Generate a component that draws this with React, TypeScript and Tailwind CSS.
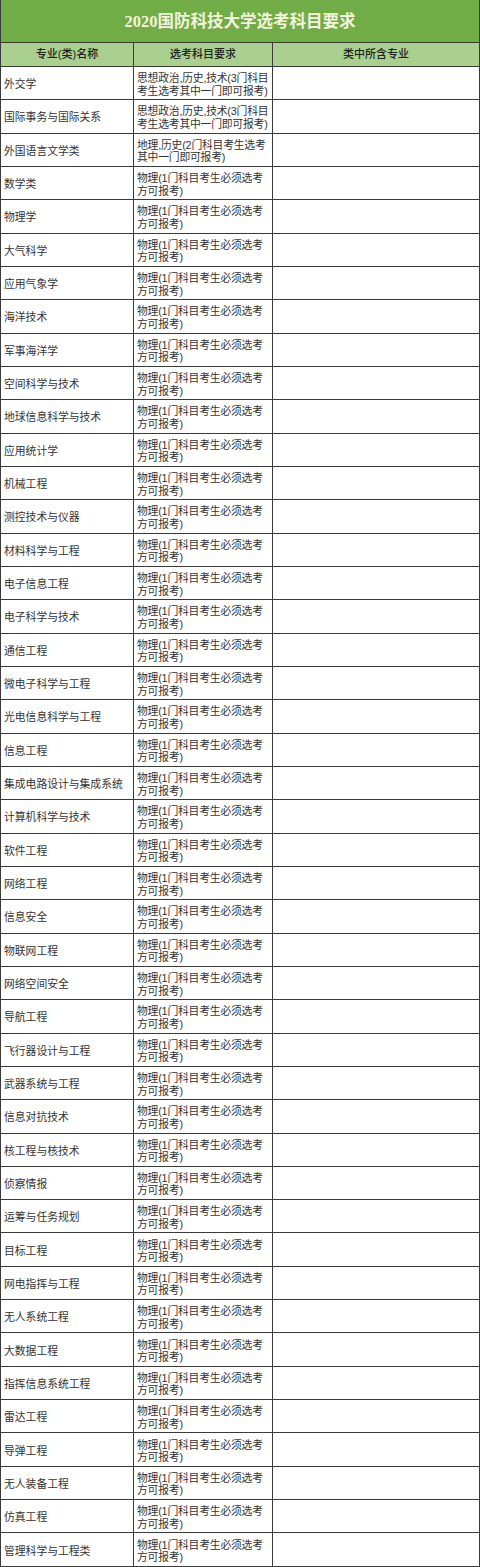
const PHYS: [string, string] = ['物理(1门科目考生必须选考', '方可报考)'];

const rows: { name: string; req: [string, string] }[] = [
  { name: '外交学', req: ['思想政治,历史,技术(3门科目', '考生选考其中一门即可报考)'] },
  { name: '国际事务与国际关系', req: ['思想政治,历史,技术(3门科目', '考生选考其中一门即可报考)'] },
  { name: '外国语言文学类', req: ['地理,历史(2门科目考生选考', '其中一门即可报考)'] },
  ...[
    '数学类',
    '物理学',
    '大气科学',
    '应用气象学',
    '海洋技术',
    '军事海洋学',
    '空间科学与技术',
    '地球信息科学与技术',
    '应用统计学',
    '机械工程',
    '测控技术与仪器',
    '材料科学与工程',
    '电子信息工程',
    '电子科学与技术',
    '通信工程',
    '微电子科学与工程',
    '光电信息科学与工程',
    '信息工程',
    '集成电路设计与集成系统',
    '计算机科学与技术',
    '软件工程',
    '网络工程',
    '信息安全',
    '物联网工程',
    '网络空间安全',
    '导航工程',
    '飞行器设计与工程',
    '武器系统与工程',
    '信息对抗技术',
    '核工程与核技术',
    '侦察情报',
    '运筹与任务规划',
    '目标工程',
    '网电指挥与工程',
    '无人系统工程',
    '大数据工程',
    '指挥信息系统工程',
    '雷达工程',
    '导弹工程',
    '无人装备工程',
    '仿真工程',
    '管理科学与工程类',
  ].map((name) => ({ name, req: PHYS })),
];

export default function App() {
  return (
    <div
      className="w-[480px] bg-white text-[10.8px] text-[#333] border-l border-[#3a3a3a]"
      style={{ fontFamily: '"Liberation Sans", "Noto Sans CJK SC", sans-serif' }}
    >
      <div className="flex h-[43px] items-center justify-center border-b border-r border-[#3a3a3a] bg-[#70ad47] pt-[3px]">
        <h1
          className="text-[16.5px] font-bold text-[#f3f3dc]"
          style={{ fontFamily: '"Liberation Serif", "Noto Sans CJK SC", serif' }}
        >
          2020国防科技大学选考科目要求
        </h1>
      </div>

      <div className="grid h-[24px] grid-cols-[133px_139px_1fr] bg-[#a9d08e] text-[11px] font-medium text-[#222]">
        <div className="flex items-center justify-center border-b border-r border-[#3a3a3a]">专业(类)名称</div>
        <div className="flex items-center justify-center border-b border-r border-[#3a3a3a]">选考科目要求</div>
        <div className="flex items-center justify-center border-b border-r border-[#3a3a3a]">类中所含专业</div>
      </div>

      {rows.map((r) => (
        <div key={r.name} className="grid h-[33.3333px] grid-cols-[133px_139px_1fr]">
          <div className="flex items-center whitespace-nowrap border-b border-r border-[#3a3a3a] pl-[3px] pt-[2px]">
            {r.name}
          </div>
          <div className="flex items-center whitespace-nowrap border-b border-r border-[#3a3a3a] pl-[3px] pt-[3px]">
            <p className="leading-[12.5px] tracking-[-0.2px]">
              {r.req[0]}
              <br />
              {r.req[1]}
            </p>
          </div>
          <div className="border-b border-r border-[#3a3a3a]" />
        </div>
      ))}
    </div>
  );
}
